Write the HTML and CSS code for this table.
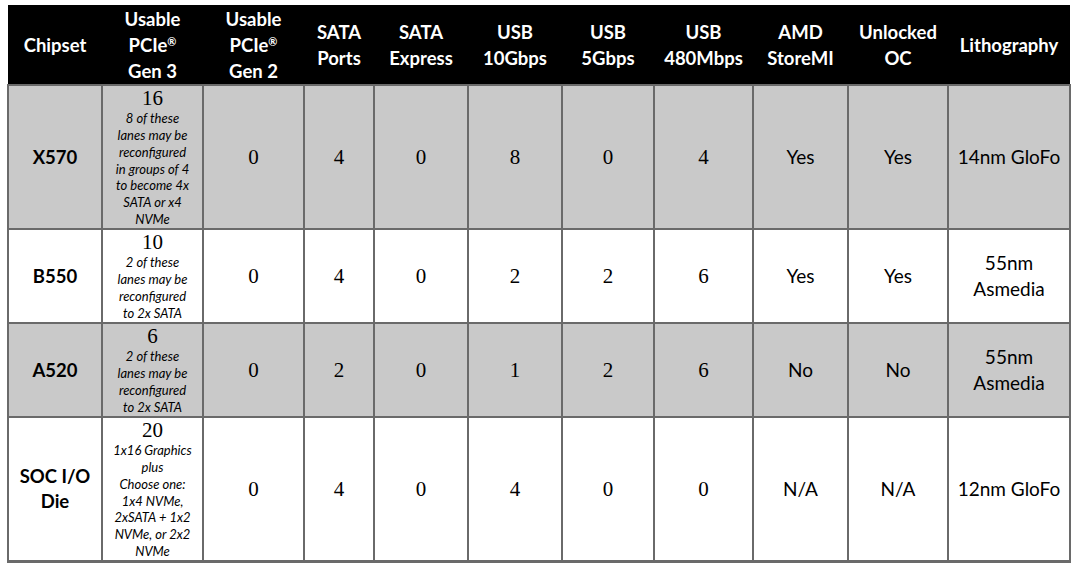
FILE: index.html
```html
<!DOCTYPE html>
<html>
<head>
<meta charset="utf-8">
<link rel="stylesheet" href="styles.css">
</head>
<body>
<table class="spec">
  <colgroup>
    <col class="c-chip"><col class="c-g3"><col class="c-g2"><col class="c-sp"><col class="c-se"><col class="c-u10"><col class="c-u5"><col class="c-u480"><col class="c-amd"><col class="c-oc"><col class="c-lith">
  </colgroup>
  <thead>
    <tr class="head">
      <th>Chipset</th>
      <th>Usable<br>PCIe<sup>®</sup><br>Gen 3</th>
      <th>Usable<br>PCIe<sup>®</sup><br>Gen 2</th>
      <th>SATA<br>Ports</th>
      <th>SATA<br>Express</th>
      <th>USB<br>10Gbps</th>
      <th>USB<br>5Gbps</th>
      <th>USB<br>480Mbps</th>
      <th>AMD<br>StoreMI</th>
      <th>Unlocked<br>OC</th>
      <th>Lithography</th>
    </tr>
  </thead>
  <tbody>
    <tr class="row gray tall first">
      <td class="label">X570</td>
      <td class="lanes"><div class="num">16</div><div class="note">8 of these<br>lanes may be<br>reconfigured<br>in groups of 4<br>to become 4x<br>SATA or x4<br>NVMe</div></td>
      <td class="num">0</td><td class="num">4</td><td class="num">0</td><td class="num">8</td><td class="num">0</td><td class="num">4</td>
      <td class="txt">Yes</td><td class="txt">Yes</td><td class="txt">14nm GloFo</td>
    </tr>
    <tr class="row white mid">
      <td class="label">B550</td>
      <td class="lanes"><div class="num">10</div><div class="note">2 of these<br>lanes may be<br>reconfigured<br>to 2x SATA</div></td>
      <td class="num">0</td><td class="num">4</td><td class="num">0</td><td class="num">2</td><td class="num">2</td><td class="num">6</td>
      <td class="txt">Yes</td><td class="txt">Yes</td><td class="txt">55nm<br>Asmedia</td>
    </tr>
    <tr class="row gray mid">
      <td class="label">A520</td>
      <td class="lanes"><div class="num">6</div><div class="note">2 of these<br>lanes may be<br>reconfigured<br>to 2x SATA</div></td>
      <td class="num">0</td><td class="num">2</td><td class="num">0</td><td class="num">1</td><td class="num">2</td><td class="num">6</td>
      <td class="txt">No</td><td class="txt">No</td><td class="txt">55nm<br>Asmedia</td>
    </tr>
    <tr class="row white tall last">
      <td class="label">SOC I/O<br>Die</td>
      <td class="lanes"><div class="num">20</div><div class="note">1x16 Graphics<br>plus<br>Choose one:<br>1x4 NVMe,<br>2xSATA + 1x2<br>NVMe, or 2x2<br>NVMe</div></td>
      <td class="num">0</td><td class="num">4</td><td class="num">0</td><td class="num">4</td><td class="num">0</td><td class="num">0</td>
      <td class="txt">N/A</td><td class="txt">N/A</td><td class="txt">12nm GloFo</td>
    </tr>
  </tbody>
</table>
</body>
</html>
```

FILE: styles.css
```css
html, body {
  margin: 0;
  padding: 0;
  background: #ffffff;
}
body {
  padding: 5px 0 0 7px;
  font-family: Lato, "Liberation Sans", sans-serif;
  color: #000;
}
.spec {
  border-collapse: collapse;
  table-layout: fixed;
  width: 1062px;
}
.c-chip { width: 94px; }
.c-g3 { width: 101px; }
.c-g2 { width: 101px; }
.c-sp { width: 70px; }
.c-se { width: 94px; }
.c-u10 { width: 94px; }
.c-u5 { width: 92px; }
.c-u480 { width: 99px; }
.c-amd { width: 95px; }
.c-oc { width: 100px; }
.c-lith { width: 122px; }

.head th {
  background: #000;
  color: #fff;
  font-weight: 700;
  font-size: 18.5px;
  line-height: 26px;
  height: 79px;
  padding: 0;
  text-align: center;
  vertical-align: middle;
  border: 0;
}
.head sup {
  font-size: 11px;
  line-height: 0;
  vertical-align: 6px;
}
.row td {
  border: 2px solid #6a6a6a;
  padding: 0;
  text-align: center;
  vertical-align: middle;
}
.gray td { background: #c9c9c9; }
.white td { background: #fff; }
.tall td { height: 143px; }
.first td { height: 142px; }
.mid td { height: 92px; }
.last td { height: 142px; border-bottom-width: 3px; }

.label {
  font-weight: 700;
  font-size: 18.5px;
  line-height: 25px;
}
.num {
  font-family: "Liberation Serif", serif;
  font-size: 21px;
  line-height: 22px;
}
.txt {
  font-size: 19px;
  line-height: 26px;
}
.note {
  font-style: italic;
  font-size: 13px;
  line-height: 16.8px;
  white-space: nowrap;
}
.lanes .num { line-height: 24px; }
```
